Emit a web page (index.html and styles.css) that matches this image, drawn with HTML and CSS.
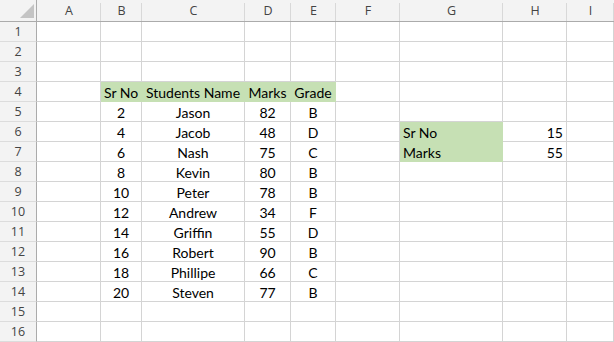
FILE: index.html
```html
<!DOCTYPE html>
<html lang="en">
<head>
  <meta charset="UTF-8">
  <title>Students Marks</title>
  <link rel="stylesheet" href="styles.css">
</head>
<body>
  <div class="sheet">
    <div class="corner"><svg width="16" height="16" viewBox="0 0 16 16"><polygon points="15,1 15,15 1,15" fill="#c4c4c4"/></svg></div><div class="ch">A</div><div class="ch">B</div><div class="ch">C</div><div class="ch">D</div><div class="ch">E</div><div class="ch">F</div><div class="ch">G</div><div class="ch">H</div><div class="ch">I</div>
    <div class="rh">1</div><div class="c"></div><div class="c"></div><div class="c"></div><div class="c"></div><div class="c"></div><div class="c"></div><div class="c"></div><div class="c"></div><div class="c"></div>
    <div class="rh">2</div><div class="c"></div><div class="c"></div><div class="c"></div><div class="c"></div><div class="c"></div><div class="c"></div><div class="c"></div><div class="c"></div><div class="c"></div>
    <div class="rh">3</div><div class="c"></div><div class="c"></div><div class="c"></div><div class="c"></div><div class="c"></div><div class="c"></div><div class="c"></div><div class="c"></div><div class="c"></div>
    <div class="rh">4</div><div class="c"></div><div class="c mid fill">Sr No</div><div class="c mid fill">Students Name</div><div class="c mid fill">Marks</div><div class="c mid fill">Grade</div><div class="c"></div><div class="c"></div><div class="c"></div><div class="c"></div>
    <div class="rh">5</div><div class="c"></div><div class="c mid">2</div><div class="c mid">Jason</div><div class="c mid">82</div><div class="c mid">B</div><div class="c"></div><div class="c"></div><div class="c"></div><div class="c"></div>
    <div class="rh">6</div><div class="c"></div><div class="c mid">4</div><div class="c mid">Jacob</div><div class="c mid">48</div><div class="c mid">D</div><div class="c"></div><div class="c fill">Sr No</div><div class="c num">15</div><div class="c"></div>
    <div class="rh">7</div><div class="c"></div><div class="c mid">6</div><div class="c mid">Nash</div><div class="c mid">75</div><div class="c mid">C</div><div class="c"></div><div class="c fill">Marks</div><div class="c num">55</div><div class="c"></div>
    <div class="rh">8</div><div class="c"></div><div class="c mid">8</div><div class="c mid">Kevin</div><div class="c mid">80</div><div class="c mid">B</div><div class="c"></div><div class="c"></div><div class="c"></div><div class="c"></div>
    <div class="rh">9</div><div class="c"></div><div class="c mid">10</div><div class="c mid">Peter</div><div class="c mid">78</div><div class="c mid">B</div><div class="c"></div><div class="c"></div><div class="c"></div><div class="c"></div>
    <div class="rh">10</div><div class="c"></div><div class="c mid">12</div><div class="c mid">Andrew</div><div class="c mid">34</div><div class="c mid">F</div><div class="c"></div><div class="c"></div><div class="c"></div><div class="c"></div>
    <div class="rh">11</div><div class="c"></div><div class="c mid">14</div><div class="c mid">Griffin</div><div class="c mid">55</div><div class="c mid">D</div><div class="c"></div><div class="c"></div><div class="c"></div><div class="c"></div>
    <div class="rh">12</div><div class="c"></div><div class="c mid">16</div><div class="c mid">Robert</div><div class="c mid">90</div><div class="c mid">B</div><div class="c"></div><div class="c"></div><div class="c"></div><div class="c"></div>
    <div class="rh">13</div><div class="c"></div><div class="c mid">18</div><div class="c mid">Phillipe</div><div class="c mid">66</div><div class="c mid">C</div><div class="c"></div><div class="c"></div><div class="c"></div><div class="c"></div>
    <div class="rh">14</div><div class="c"></div><div class="c mid">20</div><div class="c mid">Steven</div><div class="c mid">77</div><div class="c mid">B</div><div class="c"></div><div class="c"></div><div class="c"></div><div class="c"></div>
    <div class="rh">15</div><div class="c"></div><div class="c"></div><div class="c"></div><div class="c"></div><div class="c"></div><div class="c"></div><div class="c"></div><div class="c"></div><div class="c"></div>
    <div class="rh">16</div><div class="c"></div><div class="c"></div><div class="c"></div><div class="c"></div><div class="c"></div><div class="c"></div><div class="c"></div><div class="c"></div><div class="c"></div>
  </div>
</body>
</html>
```

FILE: styles.css
```css
:root {
  --grid: #d4d4d4;
  --head-bg: #f3f3f3;
  --head-line: #ababab;
  --head-text: #444444;
  --green: #c6e0b4;
}

* {
  margin: 0;
  padding: 0;
  box-sizing: border-box;
}

body {
  background-color: #ffffff;
  overflow: hidden;
}

.sheet {
  display: grid;
  grid-template-columns: 37px 64px 41px 103px 46px 45px 64px 103px 64px 1fr;
  grid-template-rows: 22px repeat(16, 20px);
  width: 614px;
  font-family: Lato, 'Open Sans', sans-serif;
  font-size: 14px;
  color: #000000;
}

.corner {
  background-color: var(--head-bg);
  border-bottom: 1px solid var(--head-line);
  border-right: 1px solid var(--head-line);
  display: flex;
  align-items: flex-end;
  justify-content: flex-end;
  padding: 0 1px 2px 0;
}

.ch {
  background: var(--head-bg) linear-gradient(#d8d8d8, #d8d8d8) no-repeat right bottom / 1px 18px;
  border-bottom: 1px solid var(--head-line);
  text-align: center;
  font-family: 'Open Sans', sans-serif;
  font-size: 12.5px;
  line-height: 22px;
  color: var(--head-text);
}

.rh {
  background-color: var(--head-bg);
  border-right: 1px solid var(--head-line);
  border-bottom: 1px solid #dcdcdc;
  text-align: center;
  font-family: 'Open Sans', sans-serif;
  font-size: 12.5px;
  line-height: 20px;
  color: var(--head-text);
}

.c {
  border-right: 1px solid var(--grid);
  border-bottom: 1px solid var(--grid);
  padding: 1px 3px 0;
  line-height: 19px;
  white-space: nowrap;
  overflow: hidden;
}

.mid {
  text-align: center;
}

.num {
  text-align: right;
}

.fill {
  background-color: var(--green);
  border-color: var(--green);
}
```
